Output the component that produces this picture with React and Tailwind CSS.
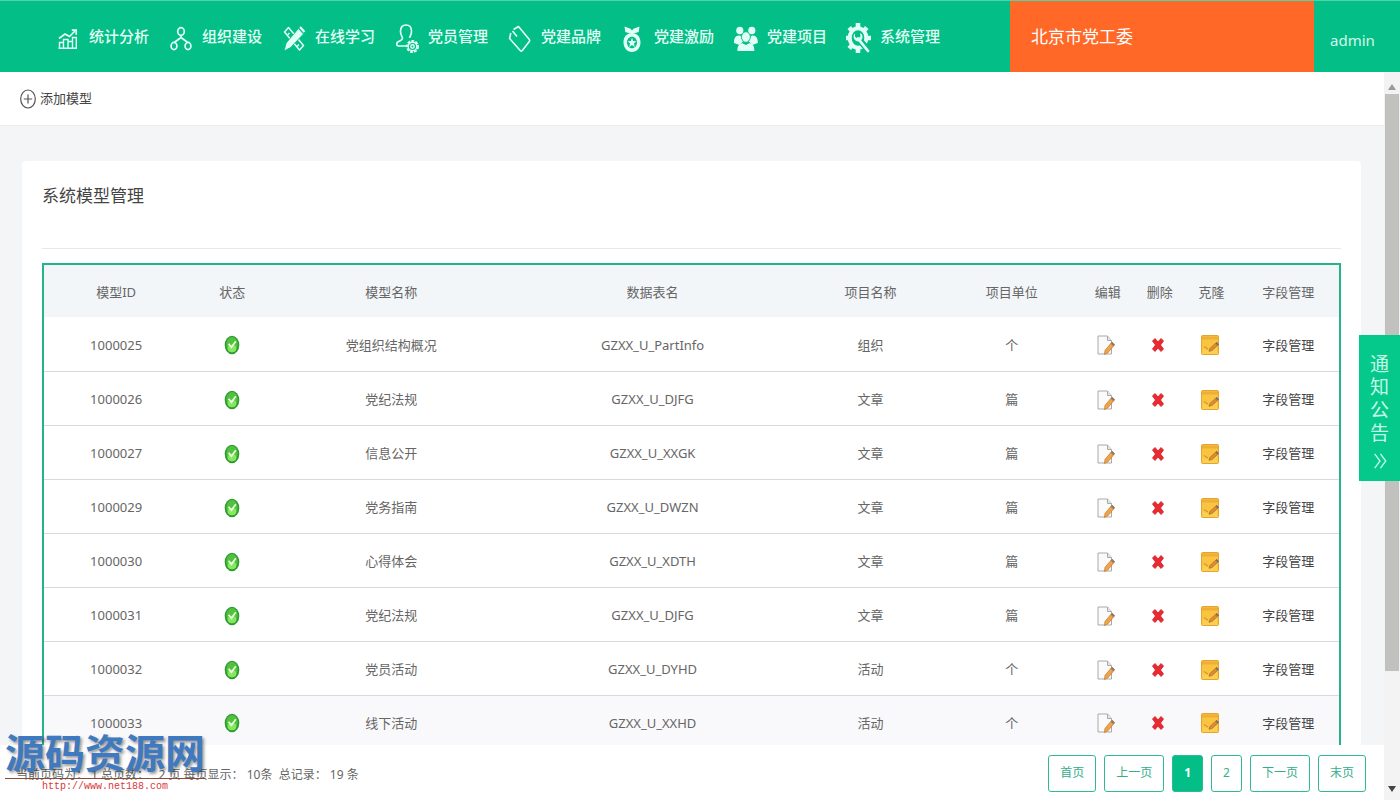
import React, { useState } from 'react';

const ChartIcon = () => (
  <svg viewBox="0 0 28 32" className="w-7 h-8" fill="none" stroke="currentColor" strokeWidth="1.4" aria-hidden="true">
    <path d="M5.5 27.3h18.5M6.5 27V21.5h4V27M10.5 21.5V18.5h4.5V27M15 20.5h4.5V27M19.5 20V16.5h3.8V27" />
    <path d="M6 17.5l6-4.5 4.5 2.5L22 10" strokeWidth="1.7" />
    <path d="M18.8 9.2h4.4v4.6" strokeWidth="1.7" />
  </svg>
);

const NodesIcon = () => (
  <svg viewBox="0 0 28 32" className="w-7 h-8" fill="none" stroke="currentColor" strokeWidth="1.7" aria-hidden="true">
    <ellipse cx="15" cy="10.5" rx="3.3" ry="3.8" />
    <ellipse cx="8" cy="25" rx="2.9" ry="3.6" />
    <ellipse cx="22" cy="25" rx="2.9" ry="3.6" />
    <path d="M15 14.3v2.2L8.500 21.200M15 16.500l6.500 4.700" />
  </svg>
);

const StudyIcon = () => (
  <svg viewBox="0 0 28 32" className="w-7 h-8" fill="none" stroke="currentColor" strokeWidth="1.5" strokeLinejoin="round" aria-hidden="true">
    <path d="M5.500 11l4-4.500L24.500 24.500l-4 4.500z" />
    <path d="M8.500 14l2-2M18 25.500l2-2" />
    <path d="M19.500 7.500l5 5.500L11.500 26.500 5 30l2.200-8z" fill="currentColor" stroke="#04be87" strokeWidth=".8" />
    <path d="M21 6l4.500 5" strokeWidth="2.200" />
  </svg>
);

const MemberIcon = () => (
  <svg viewBox="0 0 28 32" className="w-7 h-8" fill="none" stroke="currentColor" strokeWidth="1.7" aria-hidden="true">
    <path d="M14 25H6.500c-2.500 0-2-3.200-.5-4.200 2-1.200 4.500-1.500 4.500-3.500 0-1.600-2-3-2-7C8.500 6.500 10.500 4 14 4s5.500 2.500 5.500 6.300c0 3.500-1.500 5-2 6.500" />
    <circle cx="20.500" cy="25.500" r="5.600" strokeWidth="1.800" strokeDasharray="2.800 1.300" />
    <circle cx="20.500" cy="25.500" r="4.300" strokeWidth="1.400" />
    <circle cx="20.500" cy="25.500" r="1.700" strokeWidth="1.400" />
  </svg>
);

const TagIcon = () => (
  <svg viewBox="0 0 28 32" className="w-7 h-8" fill="none" stroke="currentColor" strokeWidth="1.6" strokeLinejoin="round" aria-hidden="true">
    <path d="M8.500 8.500l5-3L24.300 18.500c.6.700.6 1.400 0 2.100l-7 8.900c-.7.800-1.400.8-2.100 0L4.600 17.500l1.200-5.500" />
    <path d="M7.500 10l4.500 5.500" />
  </svg>
);

const MedalIcon = () => (
  <svg viewBox="0 0 28 32" className="w-7 h-8" fill="currentColor" aria-hidden="true">
    <path d="M6.500 5.500l6 2.200 1.500 1.800 1.500-1.800 6-2.200-.8 5.500-5 1.500h-3.400l-5-1.500z" />
    <path fillRule="evenodd" d="M14 12c4.800 0 8.500 3.600 8.500 9.300S18.800 31 14 31s-8.500-4-8.500-9.700S9.200 12 14 12zm0 3.700c-2.800 0-5 2.300-5 5.700s2.200 5.800 5 5.800 5-2.400 5-5.800-2.200-5.700-5-5.700z" />
    <path d="M14 16.700l1.200 3.200 3.100.3-2.300 2.300.7 3.500-2.700-1.900-2.700 1.900.7-3.500-2.300-2.300 3.100-.3z" />
  </svg>
);

const GroupIcon = () => (
  <svg viewBox="0 0 28 32" className="w-7 h-8" fill="currentColor" aria-hidden="true">
    <ellipse cx="8.800" cy="9.500" rx="3.600" ry="3.800" />
    <ellipse cx="20.800" cy="9.500" rx="3.600" ry="3.800" />
    <path d="M3 22c-.3-4.500 1.500-7.500 5-7.500 1.200 0 2 .6 2.300 1.500.3 2.500 1 3.500 1.700 4.500L8.500 24z" />
    <path d="M26.800 22c.3-4.500-1.500-7.500-5-7.500-1.200 0-2 .6-2.300 1.500-.3 2.500-1 3.500-1.700 4.500l3.500 3.500z" />
    <ellipse cx="14.900" cy="16" rx="4.400" ry="5.200" stroke="#04be87" strokeWidth=".8" />
    <path d="M6.500 30c-.3-5 1.500-7.500 5-7.800l3.400 1.800 3.400-1.800c3.500.3 5.300 2.800 5 7.800z" />
  </svg>
);

const GearIcon = () => (
  <svg viewBox="0 0 28 32" className="w-7 h-8" fill="none" stroke="currentColor" aria-hidden="true">
    <ellipse cx="14" cy="17" rx="8.300" ry="9.800" strokeWidth="4" />
    <path d="M14 2v5M14 27.500v5M2 17h4M22.500 17h4.500M5.200 6.500l3.300 3.800M22.800 6.500l-3.300 3.800M5.200 27.500l3.300-3.800" strokeWidth="4.600" />
    <path d="M15.500 19l9.500 11" stroke="#04be87" strokeWidth="6.500" />
    <path d="M14 17.500l10 12.500" strokeWidth="2.800" strokeLinecap="round" />
    <path d="M11 12.500v3.300l2.800 2 2.500-2V12c2.800 1.500 3 5.500.8 7.300-2.800 2.300-7 .7-7.500-2.800-.2-1.800.4-3.200 1.400-4z" fill="currentColor" stroke="none" />
  </svg>
);

const CheckIcon = () => (
  <svg viewBox="0 0 16 20" className="w-4 h-5" aria-hidden="true">
    <ellipse cx="8" cy="10" rx="7.300" ry="9.300" fill="#2f9a34" />
    <ellipse cx="8" cy="9.600" rx="5.700" ry="7.700" fill="#52c23e" />
    <ellipse cx="8" cy="13.500" rx="4.300" ry="3.800" fill="#86e85c" />
    <path d="M4.600 8.800l2.800 3.400 4.400-6" fill="none" stroke="#e9ffdf" strokeWidth="1.800" />
  </svg>
);

const EditIcon = () => (
  <svg viewBox="0 0 18 20" className="w-[18px] h-5" aria-hidden="true">
    <path d="M1 1h9.500L14.500 5.500V19H1z" fill="#fafafa" stroke="#a9a9a9" />
    <path d="M10.500 1v4.500h4" fill="#e6e6e6" stroke="#a9a9a9" />
    <path d="M15 7l2.700 2.700-7 8.300-3.400 1.500.8-4.200z" fill="#f0a445" stroke="#c17a35" strokeWidth=".7" />
    <path d="M13.700 8.700l2.600 2.500 1.500-1.700-2.600-2.600z" fill="#8d7a74" />
  </svg>
);

const DeleteIcon = () => (
  <svg viewBox="0 0 14 16" className="w-3.5 h-4" aria-hidden="true">
    <path d="M1.500 4L4 1.500 7 5l3-3.500L12.500 4 9.500 8l3 4-2.500 2.500L7 11l-3 3.500L1.500 12l3-4z" fill="#ea2a30" stroke="#d0181f" strokeWidth=".8" strokeLinejoin="round" />
  </svg>
);

const CloneIcon = () => (
  <svg viewBox="0 0 18 20" className="w-[18px] h-5" aria-hidden="true">
    <rect x=".5" y=".5" width="17" height="19" rx="1" fill="#f9c440" stroke="#e3a52d" />
    <path d="M1 1.500h16v3H1z" fill="#efae35" />
    <path d="M1.500 13c4 3.500 8 3 14.500-1v7H1.500z" fill="#fbd04f" />
    <path d="M3 11.500l4 2.500" stroke="#c98d28" />
    <path d="M15.500 7.500l2 2-6.500 6-3 .8.900-2.800z" fill="#e58b2c" stroke="#9c6a3d" strokeWidth=".7" />
    <path d="M14.500 8.500l2.200 2 1.200-1.300-2.200-2.200z" fill="#77706f" />
  </svg>
);

const NAV = [
  { label: '统计分析', Icon: ChartIcon },
  { label: '组织建设', Icon: NodesIcon },
  { label: '在线学习', Icon: StudyIcon },
  { label: '党员管理', Icon: MemberIcon },
  { label: '党建品牌', Icon: TagIcon },
  { label: '党建激励', Icon: MedalIcon },
  { label: '党建项目', Icon: GroupIcon },
  { label: '系统管理', Icon: GearIcon },
];

const COLUMNS = [
  { label: '模型ID', width: 'w-[11.2%]' },
  { label: '状态', width: 'w-[6.8%]' },
  { label: '模型名称', width: 'w-[17.7%]' },
  { label: '数据表名', width: 'w-[22.6%]' },
  { label: '项目名称', width: 'w-[11%]' },
  { label: '项目单位', width: 'w-[10.8%]' },
  { label: '编辑', width: 'w-[4%]' },
  { label: '删除', width: 'w-[4%]' },
  { label: '克隆', width: 'w-[4%]' },
  { label: '字段管理', width: 'w-[7.9%]' },
];

const MODELS = [
  { id: 1000025, name: '党组织结构概况', table: 'GZXX_U_PartInfo', item: '组织', unit: '个' },
  { id: 1000026, name: '党纪法规', table: 'GZXX_U_DJFG', item: '文章', unit: '篇' },
  { id: 1000027, name: '信息公开', table: 'GZXX_U_XXGK', item: '文章', unit: '篇' },
  { id: 1000029, name: '党务指南', table: 'GZXX_U_DWZN', item: '文章', unit: '篇' },
  { id: 1000030, name: '心得体会', table: 'GZXX_U_XDTH', item: '文章', unit: '篇' },
  { id: 1000031, name: '党纪法规', table: 'GZXX_U_DJFG', item: '文章', unit: '篇' },
  { id: 1000032, name: '党员活动', table: 'GZXX_U_DYHD', item: '活动', unit: '个' },
  { id: 1000033, name: '线下活动', table: 'GZXX_U_XXHD', item: '活动', unit: '个' },
];

const ACTIONS = [
  { label: '编辑', Icon: EditIcon },
  { label: '删除', Icon: DeleteIcon },
  { label: '克隆', Icon: CloneIcon },
];

const PAGES = ['首页', '上一页', '1', '2', '下一页', '末页'];

const Header = () => (
  <header className="flex h-[72px] shrink-0 border-t border-[#4fd3ab] bg-[#04be87] text-white">
    <nav className="flex flex-1 items-center gap-[17px] pl-[53px]">
      {NAV.map(({ label, Icon }) => (
        <a key={label} href="#" className="flex shrink-0 items-center gap-2 text-[15px] font-medium text-[#e2fff5]">
          <Icon />
          {label}
        </a>
      ))}
    </nav>
    <div className="flex w-[304px] items-center bg-[#ff6826] px-[21px] text-[17px]">北京市党工委</div>
    <a href="#" className="flex w-[86px] items-center pl-4 pt-2 text-[15px] text-[#d3f8ea]">admin</a>
  </header>
);

const ModelTable = ({ models }) => (
  <table className="w-full table-fixed border-2 border-[#25b48a] text-center text-[13px] text-[#666]">
    <thead>
      <tr className="h-[53px] bg-[#f3f6f9]">
        {COLUMNS.map((col) => (
          <th key={col.label} className={`${col.width} pt-1 font-normal`}>{col.label}</th>
        ))}
      </tr>
    </thead>
    <tbody>
      {models.map((m) => (
        <tr key={m.id} className="h-[54px] border-b border-[#d9dadc] last:bg-[#f9f9fb]">
          <td className="pt-[3px]">{m.id}</td>
          <td className="pt-[3px]"><span className="flex justify-center"><CheckIcon /></span></td>
          <td className="pt-[3px]">{m.name}</td>
          <td className="pt-[3px]">{m.table}</td>
          <td className="pt-[3px]">{m.item}</td>
          <td className="pt-[3px]">{m.unit}</td>
          {ACTIONS.map(({ label, Icon }) => (
            <td key={label} className="pt-[3px] pr-1">
              <button aria-label={label} className="mx-auto block"><Icon /></button>
            </td>
          ))}
          <td className="pt-[3px]"><a href="#" className="text-[#444]">字段管理</a></td>
        </tr>
      ))}
    </tbody>
  </table>
);

const Scrollbar = () => (
  <div className="flex w-4 shrink-0 flex-col items-center bg-[#f3f3f3] pt-2 pb-2" aria-hidden="true">
    <svg viewBox="0 0 8 6" className="w-2 h-1.5 mt-1"><path d="M4 0l4 6H0z" fill="#9a9a9a" /></svg>
    <div className="mt-1 h-[81%] w-3.5 bg-[#c1c1c0]" />
    <svg viewBox="0 0 8 6" className="w-2 h-1.5 mt-auto"><path d="M4 6l4-6H0z" fill="#444" /></svg>
  </div>
);

const Footer = ({ page, setPage }) => (
  <footer className="flex h-[55px] shrink-0 items-center justify-between bg-white pl-4 pr-[18px] pt-px">
    <p className="pt-1 text-[12px] text-[#666] whitespace-pre">当前页码为： 1 总页数：   2 页 每页显示： 10条  总记录： 19 条</p>
    <div className="flex gap-2">
      {PAGES.map((p) => (
        <button
          key={p}
          onClick={() => /^\d$/.test(p) && setPage(p)}
          className={`h-[37px] rounded-[3px] border border-[#2fb893] px-[11px] text-[12px] ${
            p === page ? 'bg-[#04be87] font-bold text-white' : 'bg-white text-[#35ae8c]'
          }`}
        >
          {p}
        </button>
      ))}
    </div>
  </footer>
);

const App = () => {
  const [page, setPage] = useState('1');

  return (
    <div className="relative flex h-screen flex-col overflow-hidden bg-white font-['Noto_Sans','Noto_Sans_CJK_SC',sans-serif]">
      <Header />
      <div className="flex min-h-0 flex-1">
        <div className="flex min-w-0 flex-1 flex-col">
          <div className="flex h-[54px] shrink-0 items-center border-b border-[#ededed] px-5">
            <button className="flex items-center gap-1 text-[13px] text-[#444]">
              <svg viewBox="0 0 16 20" className="w-4 h-5" fill="none" stroke="#555" strokeWidth="1.200" aria-hidden="true">
                <ellipse cx="8" cy="10" rx="7.300" ry="9" />
                <path d="M8 5.500v9M3.800 10h8.400" />
              </svg>
              添加模型
            </button>
          </div>
          <main className="min-h-0 flex-1 overflow-hidden bg-[#f3f5f6] pt-[35px] pl-[22px] pr-[23px]">
            <section className="min-h-full rounded-t bg-white px-5 pt-5">
              <h1 className="h-[68px] border-b border-[#e6e8e9] text-[17px] leading-[30px] text-[#444]">系统模型管理</h1>
              <div className="pt-[14px]">
                <ModelTable models={MODELS} />
              </div>
            </section>
          </main>
          <Footer page={page} setPage={setPage} />
        </div>
        <Scrollbar />
      </div>

      <button className="absolute right-0 top-[335px] w-[41px] bg-[#05c88b] pt-[18px] pb-3 text-[19px] text-[#c4fae6]">
        <span className="mx-auto block w-5 leading-[23px]">通知公告</span>
        <svg viewBox="0 0 16 18" className="mx-auto mt-2 w-4 h-4" fill="none" stroke="currentColor" strokeWidth="1.500" aria-hidden="true">
          <path d="M2 1l6 8-6 8M8.500 1l6 8-6 8" />
        </svg>
      </button>

      <div className="absolute bottom-[5px] left-[5px] w-[200px] text-center">
        <div className="border-b border-[#8a4a35] pb-0.5 text-[40px] font-bold leading-[46px] text-[#3f79bf] [text-shadow:2px_2px_3px_rgba(0,0,0,0.4)]">源码资源网</div>
        <a href="http://www.net188.com" className="block font-['Liberation_Mono',monospace] text-[10px] leading-4 text-[#d8383c]">http://www.net188.com</a>
      </div>
    </div>
  );
};

export default App;
